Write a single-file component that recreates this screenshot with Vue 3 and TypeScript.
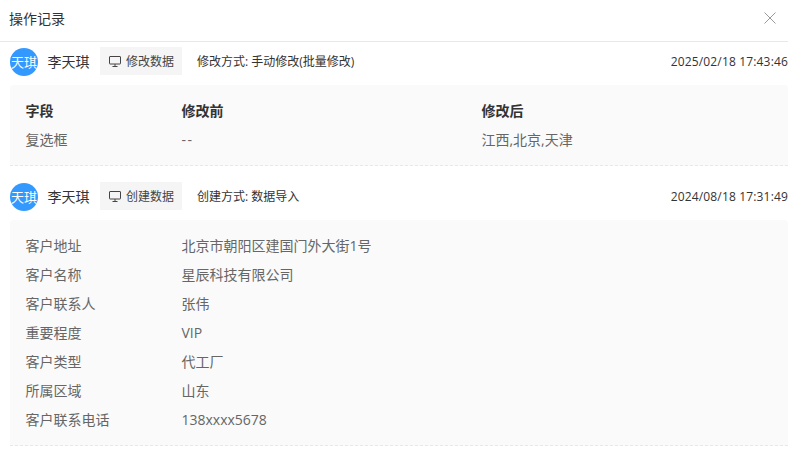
<script setup lang="ts">
interface Row { label: string; value: string }
const rows: Row[] = [
  { label: '客户地址', value: '北京市朝阳区建国门外大街1号' },
  { label: '客户名称', value: '星辰科技有限公司' },
  { label: '客户联系人', value: '张伟' },
  { label: '重要程度', value: 'VIP' },
  { label: '客户类型', value: '代工厂' },
  { label: '所属区域', value: '山东' },
  { label: '客户联系电话', value: '138xxxx5678' },
]
</script>

<template>
  <div class="page">
    <header class="head">
      <span class="title">操作记录</span>
      <svg class="close" width="12" height="12" viewBox="0 0 12 12" fill="none" stroke="#999" stroke-width="1">
        <path d="M0.5 0.5 L11.5 11.5 M11.5 0.5 L0.5 11.5" />
      </svg>
    </header>

    <section class="log">
      <div class="meta">
        <span class="avatar">天琪</span>
        <span class="name">李天琪</span>
        <span class="tag">
          <svg width="14" height="14" viewBox="0 0 14 14" fill="none" stroke="#444" stroke-width="1">
            <rect x="1.5" y="2.5" width="11" height="7.5" rx="0.5" />
            <path d="M4.5 12.5 H9.5 M7 10 V12.5" />
          </svg>
          修改数据
        </span>
        <span class="desc">修改方式: 手动修改(批量修改)</span>
        <span class="time">2025/02/18 17:43:46</span>
      </div>
      <div class="panel first">
        <div class="diff strong">
          <span>字段</span><span>修改前</span><span>修改后</span>
        </div>
        <div class="diff">
          <span>复选框</span><span class="dash">--</span><span>江西,北京,天津</span>
        </div>
      </div>
    </section>

    <section class="log">
      <div class="meta">
        <span class="avatar">天琪</span>
        <span class="name">李天琪</span>
        <span class="tag">
          <svg width="14" height="14" viewBox="0 0 14 14" fill="none" stroke="#444" stroke-width="1">
            <rect x="1.5" y="2.5" width="11" height="7.5" rx="0.5" />
            <path d="M4.5 12.5 H9.5 M7 10 V12.5" />
          </svg>
          创建数据
        </span>
        <span class="desc">创建方式: 数据导入</span>
        <span class="time">2024/08/18 17:31:49</span>
      </div>
      <div class="panel">
        <div v-for="r in rows" :key="r.label" class="kv">
          <span>{{ r.label }}</span><span>{{ r.value }}</span>
        </div>
      </div>
    </section>
  </div>
</template>

<style>
html, body { margin: 0; background: #fff; }
</style>

<style scoped>
.page {
  width: 788px;
  height: 474px;
  overflow: hidden;
  box-sizing: border-box;
  font-family: "Open Sans", "Noto Sans CJK SC", sans-serif;
  color: #333;
}
.head {
  height: 37px;
  border-bottom: 1px solid #e8e8e8;
  display: flex;
  align-items: center;
  justify-content: space-between;
  padding: 0 12px 4px 9px;
  box-sizing: content-box;
}
.title { font-size: 14px; color: #333; margin-top: -2px; }
.close { margin-top: -1px; }
.log { padding-left: 10px; }
.meta {
  height: 28px;
  margin-top: 5px;
  display: flex;
  align-items: center;
}
.avatar {
  width: 28px;
  height: 27px;
  padding-bottom: 1px;
  margin-top: 2px;
  border-radius: 50%;
  background: #3399ff;
  color: #fff;
  font-size: 13px;
  display: flex;
  align-items: center;
  justify-content: center;
  white-space: nowrap;
}
.name { margin-left: 9.5px; font-size: 14px; width: 52.5px; color: #333; }
.tag {
  width: 82px;
  height: 28px;
  background: #f5f5f5;
  font-size: 12px;
  color: #444;
  display: flex;
  align-items: center;
  justify-content: center;
  gap: 4px;
}
.desc { margin-left: 15px; font-size: 12px; color: #333; }
.time { margin-left: auto; font-size: 12px; color: #333; letter-spacing: 0.16px; }
.panel {
  margin-top: 10px;
  background: #fafafa;
  border-bottom: 1px dashed #e8e8e8;
  border-radius: 4px 4px 0 0;
  padding: 11px 15.5px 11px;
  font-size: 14px;
  line-height: 29px;
  color: #666;
}
.panel.first { margin-bottom: 16px; }
.diff {
  display: grid;
  grid-template-columns: 156px 300px 1fr;
  height: 29px;
  align-items: baseline;
}
.dash { letter-spacing: 1.4px; }
.strong { font-weight: 700; color: #333; }
.kv {
  display: grid;
  grid-template-columns: 156px 1fr;
  height: 29px;
  align-items: baseline;
}
</style>
